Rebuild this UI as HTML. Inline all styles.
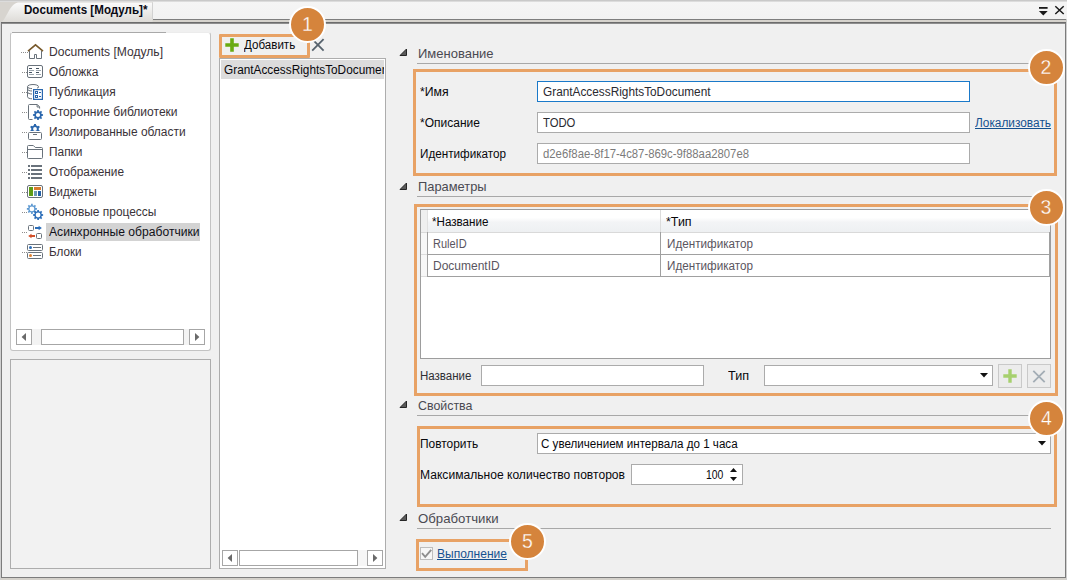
<!DOCTYPE html>
<html lang="ru"><head><meta charset="utf-8"><title>Documents [Модуль]</title>
<style>
html,body{margin:0;padding:0}
body{width:1067px;height:580px;overflow:hidden;background:#f0f0f0;position:relative;font-family:"Liberation Sans",sans-serif;font-size:12px;color:#1e1e1e}
.a{position:absolute;box-sizing:border-box}
.t{position:absolute;white-space:nowrap;line-height:16px;height:16px;transform-origin:0 50%}
.ic{position:absolute;overflow:visible}
.inp{position:absolute;box-sizing:border-box;background:#fff;border:1px solid #ababab}
.ob{position:absolute;box-sizing:border-box;border:3px solid #e8a265}
.num{position:absolute;box-sizing:border-box;width:37px;height:37px;border-radius:50%;background:#d5843c;border:2px solid #fff;color:#fff;font-size:19.5px;line-height:32px;text-align:center;-webkit-text-stroke:0.3px #d5843c}
.hl{position:absolute;height:1px;background:#a8a8a8}
.tri{position:absolute;width:0;height:0;border-left:8px solid transparent;border-bottom:8px solid #3c3c3c}
.sb{position:absolute;box-sizing:border-box;background:#fff;border:1px solid #a6a6a6}
.lnk{color:#15518f;text-decoration:underline}
</style></head><body>

<div class="a" style="left:0;top:0;width:1067px;height:19px;background:linear-gradient(#f5f5f5,#f2f2f2)"></div>
<div class="a" style="left:0;top:0;width:1067px;height:1px;background:#c9c9c9"></div>
<div class="a" style="left:0;top:1px;width:1067px;height:1px;background:#dcdcdc"></div>
<div class="a" style="left:0;top:19px;width:1067px;height:1px;background:#7e7e7e"></div>
<div class="a" style="left:0;top:20px;width:1067px;height:2px;background:#d6d3cd"></div>
<div class="a" style="left:1px;top:22px;width:1065px;height:556px;border:1px solid #7c7c7c"></div>
<div class="a" style="left:1px;top:22px;width:1065px;height:1px;background:#6c6c6c"></div>
<div class="a" style="left:2px;top:23px;width:1063px;height:1px;background:#8e8e8e"></div>
<div class="a" style="left:0;top:578px;width:1067px;height:2px;background:#d4d1cb"></div>
<div class="a" style="left:0;top:22px;width:1px;height:558px;background:#d0d0d0"></div>
<div class="a" style="left:1066px;top:19px;width:1px;height:561px;background:#d0d0d0"></div>
<svg class="ic" style="left:0;top:0" width="160" height="22" viewBox="0 0 160 22"><defs><linearGradient id="tg" x1="0" y1="0" x2="0" y2="1"><stop offset="0" stop-color="#fbfbfb"/><stop offset="1" stop-color="#dddbd7"/></linearGradient></defs><rect x="0" y="2" width="153" height="20" fill="#d7d4cf"/><path d="M1 22C6 21 9 4 18 2.5H152.5V22Z" fill="url(#tg)"/><path d="M152.5 2.5V19" stroke="#d2d2d2" stroke-width="1"/></svg>
<span class="t" style="left:24px;top:1.5999999999999996px;font-size:12px;color:#0a0a14;font-weight:bold;transform:scaleX(0.9664);">Documents [Модуль]*</span>
<svg class="ic" style="left:1036px;top:3px" width="30" height="14" viewBox="0 0 30 14"><path d="M3 4.9H11.6" stroke="#1a1a1a" stroke-width="1.8"/><path d="M2.9 8H11.7L7.3 12.5Z" fill="#1a1a1a"/><path d="M19.3 3.3L27.7 11M27.7 3.3L19.3 11" stroke="#1a1a1a" stroke-width="1.5"/></svg>
<div class="a" style="left:10px;top:32px;width:201px;height:319px;background:#fff;border:1px solid #c3c3c3;border-top-color:#ececec;border-radius:3px"></div>
<div class="a" style="left:12px;top:32px;width:154px;height:1px;background:#a9a9a9"></div>
<div class="a" style="left:46px;top:223px;width:154px;height:18px;background:#d3d3d3"></div>
<div class="a" style="left:21px;top:52px;width:7px;height:1px;background:repeating-linear-gradient(90deg,#8c8c8c 0 1px,transparent 1px 2px)"></div>
<svg class="ic" style="left:27px;top:44px" width="16" height="16" viewBox="0 0 16 16"><path d="M2.5 7V14.5H7.5V10.5H9.5V14.5H14.5V7" fill="#fff" stroke="#69727b" stroke-width="1"/><path d="M1 7.1L8.5 0.8L16 7.1" fill="none" stroke="#77582a" stroke-width="1.6"/></svg>
<span class="t" style="left:49px;top:43.7px;font-size:12px;color:#3a3238;transform:scaleX(1.0068);">Documents [Модуль]</span>
<div class="a" style="left:22px;top:72px;width:6px;height:1px;background:repeating-linear-gradient(90deg,#8c8c8c 0 1px,transparent 1px 2px)"></div>
<svg class="ic" style="left:27px;top:64px" width="16" height="16" viewBox="0 0 16 16"><rect x="0.5" y="1.5" width="15" height="12" rx="1.5" fill="#fff" stroke="#69727b"/><path d="M2 4.5H5M9 4.5H12M2 8.5H5M9 8.5H12" stroke="#44525f" stroke-width="1"/><path d="M2 6.5H7M9 6.5H14M2 10.5H7M9 10.5H14" stroke="#9ca6ae" stroke-width="1"/></svg>
<span class="t" style="left:49px;top:63.7px;font-size:12px;color:#3a3238;transform:scaleX(0.9967);">Обложка</span>
<div class="a" style="left:22px;top:92px;width:6px;height:1px;background:repeating-linear-gradient(90deg,#8c8c8c 0 1px,transparent 1px 2px)"></div>
<svg class="ic" style="left:27px;top:84px" width="16" height="16" viewBox="0 0 16 16"><path d="M0.5 2.7C0.5 -0.2 11.5 -0.2 11.5 2.7V3.4C11.3 3.9 10.6 4 10 3.8M0.5 2.7V12.8C0.5 14 2.6 14.7 5 14.8M0.5 5.2C0.8 6.3 2.6 6.9 5 7M0.5 8.2C0.8 9.3 2.6 9.9 5 10M0.5 2.9C0.8 4 2.6 4.5 5 4.6" fill="none" stroke="#69727b" stroke-width="1"/><rect x="6.6" y="5.6" width="8.8" height="9.8" fill="#fff" stroke="#2b67ad" stroke-width="1.2"/><path d="M8 7H11V10H8ZM9 8V9H10V8ZM8 11H11V14H8ZM9 12V13H10V12Z" fill="#2b67ad" fill-rule="evenodd"/><path d="M12 8.5H14M12 12.5H14" stroke="#2b67ad" stroke-width="1"/></svg>
<span class="t" style="left:49px;top:83.7px;font-size:12px;color:#3a3238;transform:scaleX(0.9931);">Публикация</span>
<div class="a" style="left:22px;top:112px;width:6px;height:1px;background:repeating-linear-gradient(90deg,#8c8c8c 0 1px,transparent 1px 2px)"></div>
<svg class="ic" style="left:27px;top:104px" width="16" height="16" viewBox="0 0 16 16"><path d="M5.5 15.5H2.5Q1.5 15.5 1.5 14.5V1.5Q1.5 0.5 2.5 0.5H10.3L12.6 2.8V4.6" fill="none" stroke="#69727b" stroke-width="1"/><path d="M10.1 0.7V3H12.4" fill="none" stroke="#69727b" stroke-width="1"/><path d="M16.04 10.20 L16.04 11.80 L14.67 11.88 L14.22 12.97 L15.13 14.00 L14.00 15.13 L12.97 14.22 L11.88 14.67 L11.80 16.04 L10.20 16.04 L10.12 14.67 L9.03 14.22 L8.00 15.13 L6.87 14.00 L7.78 12.97 L7.33 11.88 L5.96 11.80 L5.96 10.20 L7.33 10.12 L7.78 9.03 L6.87 8.00 L8.00 6.87 L9.03 7.78 L10.12 7.33 L10.20 5.96 L11.80 5.96 L11.88 7.33 L12.97 7.78 L14.00 6.87 L15.13 8.00 L14.22 9.03 L14.67 10.12Z M13.10 11.00 A2.10 2.10 0 1 0 8.90 11.00 A2.10 2.10 0 1 0 13.10 11.00Z" fill="#2b67ad" fill-rule="evenodd"/></svg>
<span class="t" style="left:49px;top:103.7px;font-size:12px;color:#3a3238;transform:scaleX(1.0044);">Сторонние библиотеки</span>
<div class="a" style="left:22px;top:132px;width:6px;height:1px;background:repeating-linear-gradient(90deg,#8c8c8c 0 1px,transparent 1px 2px)"></div>
<svg class="ic" style="left:27px;top:124px" width="16" height="16" viewBox="0 0 16 16"><clipPath id="c5"><rect x="0" y="-1" width="16" height="8"/></clipPath><g clip-path="url(#c5)"><path d="M7.08 -0.12 L8.92 -0.12 L9.09 1.25 L10.70 2.19 L11.97 1.64 L12.89 3.24 L11.79 4.07 L11.79 5.93 L12.89 6.76 L11.97 8.36 L10.70 7.81 L9.09 8.75 L8.92 10.12 L7.08 10.12 L6.91 8.75 L5.30 7.81 L4.03 8.36 L3.11 6.76 L4.21 5.93 L4.21 4.07 L3.11 3.24 L4.03 1.64 L5.30 2.19 L6.91 1.25Z M9.90 5.00 A1.90 1.90 0 1 0 6.10 5.00 A1.90 1.90 0 1 0 9.90 5.00Z" fill="#2b67ad" fill-rule="evenodd"/></g><rect x="1.5" y="8.5" width="13" height="7" rx="1" fill="#fff" stroke="#69727b"/><path d="M6 10.5H10" stroke="#69727b" stroke-width="1"/></svg>
<span class="t" style="left:49px;top:123.69999999999999px;font-size:12px;color:#3a3238;transform:scaleX(0.9961);">Изолированные области</span>
<div class="a" style="left:22px;top:152px;width:6px;height:1px;background:repeating-linear-gradient(90deg,#8c8c8c 0 1px,transparent 1px 2px)"></div>
<svg class="ic" style="left:27px;top:144px" width="16" height="16" viewBox="0 0 16 16"><path d="M0.5 13.5V2.5Q0.5 1.5 1.5 1.5H6.3L8.3 3.5H14.5Q15.5 3.5 15.5 4.5V13.5Q15.5 14.5 14.5 14.5H1.5Q0.5 14.5 0.5 13.5Z" fill="#fff" stroke="#69727b"/><path d="M0.5 5.5H15.5" stroke="#69727b" stroke-width="1"/></svg>
<span class="t" style="left:49px;top:143.7px;font-size:12px;color:#3a3238;transform:scaleX(0.9896);">Папки</span>
<div class="a" style="left:22px;top:172px;width:6px;height:1px;background:repeating-linear-gradient(90deg,#8c8c8c 0 1px,transparent 1px 2px)"></div>
<svg class="ic" style="left:27px;top:164px" width="16" height="16" viewBox="0 0 16 16"><path d="M1 2H3M1 6H3M1 10H3M1 14H3M4 2H15M4 6H15M4 10H15M4 14H15" stroke="#69727b" stroke-width="2"/></svg>
<span class="t" style="left:49px;top:163.7px;font-size:12px;color:#3a3238;transform:scaleX(0.9830);">Отображение</span>
<div class="a" style="left:22px;top:192px;width:6px;height:1px;background:repeating-linear-gradient(90deg,#8c8c8c 0 1px,transparent 1px 2px)"></div>
<svg class="ic" style="left:27px;top:184px" width="16" height="16" viewBox="0 0 16 16"><rect x="0.5" y="1.5" width="15" height="12" rx="1.5" fill="#fff" stroke="#69727b"/><rect x="2" y="3" width="4" height="9" fill="#5e9c16"/><rect x="7" y="3" width="7" height="3" fill="#d87a2e"/><rect x="7" y="7" width="3" height="5" fill="#6c9ab4"/><rect x="11" y="7" width="3" height="5" fill="#2461a8"/></svg>
<span class="t" style="left:49px;top:183.7px;font-size:12px;color:#3a3238;transform:scaleX(0.9493);">Виджеты</span>
<div class="a" style="left:22px;top:212px;width:6px;height:1px;background:repeating-linear-gradient(90deg,#8c8c8c 0 1px,transparent 1px 2px)"></div>
<svg class="ic" style="left:27px;top:204px" width="16" height="16" viewBox="0 0 16 16"><path d="M9.94 4.10 L9.94 5.70 L8.57 5.78 L8.12 6.87 L9.03 7.90 L7.90 9.03 L6.87 8.12 L5.78 8.57 L5.70 9.94 L4.10 9.94 L4.02 8.57 L2.93 8.12 L1.90 9.03 L0.77 7.90 L1.68 6.87 L1.23 5.78 L-0.14 5.70 L-0.14 4.10 L1.23 4.02 L1.68 2.93 L0.77 1.90 L1.90 0.77 L2.93 1.68 L4.02 1.23 L4.10 -0.14 L5.70 -0.14 L5.78 1.23 L6.87 1.68 L7.90 0.77 L9.03 1.90 L8.12 2.93 L8.57 4.02Z M7.30 4.90 A2.40 2.40 0 1 0 2.50 4.90 A2.40 2.40 0 1 0 7.30 4.90Z" fill="#5f9ad2" fill-rule="evenodd"/><path d="M16.14 10.20 L16.14 11.80 L14.77 11.88 L14.32 12.97 L15.23 14.00 L14.10 15.13 L13.07 14.22 L11.98 14.67 L11.90 16.04 L10.30 16.04 L10.22 14.67 L9.13 14.22 L8.10 15.13 L6.97 14.00 L7.88 12.97 L7.43 11.88 L6.06 11.80 L6.06 10.20 L7.43 10.12 L7.88 9.03 L6.97 8.00 L8.10 6.87 L9.13 7.78 L10.22 7.33 L10.30 5.96 L11.90 5.96 L11.98 7.33 L13.07 7.78 L14.10 6.87 L15.23 8.00 L14.32 9.03 L14.77 10.12Z M13.50 11.00 A2.40 2.40 0 1 0 8.70 11.00 A2.40 2.40 0 1 0 13.50 11.00Z" fill="#2b6db8" fill-rule="evenodd"/></svg>
<span class="t" style="left:49px;top:203.7px;font-size:12px;color:#3a3238;transform:scaleX(0.9944);">Фоновые процессы</span>
<div class="a" style="left:22px;top:232px;width:6px;height:1px;background:repeating-linear-gradient(90deg,#8c8c8c 0 1px,transparent 1px 2px)"></div>
<svg class="ic" style="left:27px;top:224px" width="16" height="16" viewBox="0 0 16 16"><rect x="1.5" y="1.5" width="5" height="5" rx="1" fill="#fff" stroke="#69727b"/><path d="M8 4H12.5" stroke="#2b6db8" stroke-width="2"/><path d="M11.6 1.7L14.9 4L11.6 6.3Z" fill="#2b6db8"/><rect x="9.5" y="9.5" width="5" height="5" rx="1" fill="#fff" stroke="#69727b"/><path d="M4 12H8" stroke="#d2502a" stroke-width="2"/><path d="M4.5 9.7L1.2 12L4.5 14.3Z" fill="#d2502a"/></svg>
<span class="t" style="left:49px;top:223.7px;font-size:12px;color:#101018;transform:scaleX(1.0097);">Асинхронные обработчики</span>
<div class="a" style="left:22px;top:252px;width:6px;height:1px;background:repeating-linear-gradient(90deg,#8c8c8c 0 1px,transparent 1px 2px)"></div>
<svg class="ic" style="left:27px;top:244px" width="16" height="16" viewBox="0 0 16 16"><rect x="0.5" y="0.5" width="15" height="6" rx="1" fill="#fff" stroke="#69727b"/><rect x="0.5" y="8.5" width="15" height="6" rx="1" fill="#fff" stroke="#69727b"/><circle cx="3.5" cy="3.5" r="1.5" fill="#2b6db8"/><circle cx="3.5" cy="11.5" r="1.5" fill="#e0812f"/><path d="M6 3.5H14M6 11.5H14" stroke="#69727b" stroke-width="1"/></svg>
<span class="t" style="left:49px;top:243.7px;font-size:12px;color:#3a3238;transform:scaleX(0.9727);">Блоки</span>
<div class="a" style="left:32px;top:329px;width:157px;height:16px;background:#f3f3f3"></div>
<div class="sb" style="left:16px;top:329px;width:16px;height:16px"></div><svg class="ic" style="left:16px;top:329px" width="16" height="16"><path d="M10 4V12L5.6 8Z" fill="#6a6a6a"/></svg><div class="sb" style="left:41px;top:329px;width:143px;height:16px"></div><div class="sb" style="left:189px;top:329px;width:16px;height:16px"></div><svg class="ic" style="left:189px;top:329px" width="16" height="16"><path d="M6 4V12L10.4 8Z" fill="#6a6a6a"/></svg>
<div class="a" style="left:10px;top:359px;width:201px;height:210px;background:#f2f2f2;border:1px solid #adadad"></div>
<div class="a" style="left:219px;top:34px;width:91px;height:24px;border:3px solid #e8a265;border-radius:1px"></div>
<svg class="ic" style="left:225px;top:38px" width="14" height="14"><path d="M5.2 0.3H8.8V5.2H13.7V8.8H8.8V13.7H5.2V8.8H0.3V5.2H5.2Z" fill="#69ab12"/></svg>
<span class="t" style="left:244px;top:37.3px;font-size:12px;color:#08080c;transform:scaleX(0.9652);">Добавить</span>
<svg class="ic" style="left:311px;top:38px" width="14" height="14"><path d="M1.2 1.2L12.6 12.6M12.6 1.2L1.2 12.6" stroke="#56626d" stroke-width="1.8"/></svg>
<div class="num" style="left:289.0px;top:6.0px">1</div>
<div class="a" style="left:219px;top:58px;width:167px;height:511px;background:#fff;border:1px solid #adadad"></div>
<div class="a" style="left:221px;top:60px;width:163px;height:19px;background:#dcdcdc;overflow:hidden"><span class="t" style="left:3px;top:1.5999999999999996px;font-size:12px;color:#08080c;transform:scaleX(0.9848);">GrantAccessRightsToDocument</span></div>
<div class="a" style="left:358px;top:550px;width:9px;height:16px;background:#f6f6f6"></div>
<div class="sb" style="left:222px;top:550px;width:16px;height:16px"></div><svg class="ic" style="left:222px;top:550px" width="16" height="16"><path d="M10 4V12L5.6 8Z" fill="#6a6a6a"/></svg><div class="sb" style="left:239px;top:550px;width:119px;height:16px"></div><div class="sb" style="left:367px;top:550px;width:16px;height:16px"></div><svg class="ic" style="left:367px;top:550px" width="16" height="16"><path d="M6 4V12L10.4 8Z" fill="#6a6a6a"/></svg>
<svg class="ic" style="left:399px;top:48px" width="8" height="8"><path d="M1 7.5H7.5V1Z" fill="#5a5a5a" stroke="#262626" stroke-width="1" stroke-linejoin="miter"/></svg><span class="t" style="left:418px;top:45.6px;font-size:13px;color:#4a4a52;">Именование</span><div class="hl" style="left:417px;top:63px;width:634px"></div>
<div class="ob" style="left:413px;top:69px;width:644px;height:107px"></div>
<span class="t" style="left:420px;top:84px;font-size:12px;color:#08080c;transform:scaleX(1.0197);">*Имя</span>
<div class="inp" style="left:537px;top:81px;width:433px;height:21px;border-color:#1a79c9"></div>
<span class="t" style="left:543px;top:84px;font-size:12px;color:#2a2a30;transform:scaleX(0.9848);">GrantAccessRightsToDocument</span>
<span class="t" style="left:420px;top:115px;font-size:12px;color:#08080c;">*Описание</span>
<div class="inp" style="left:537px;top:112px;width:433px;height:21px"></div>
<span class="t" style="left:543px;top:115px;font-size:12px;color:#2a2a30;transform:scaleX(0.9404);">TODO</span>
<span class="t lnk" style="left:975px;top:115px;font-size:12px;color:#15518f;transform:scaleX(0.9884);">Локализовать</span>
<span class="t" style="left:420px;top:146px;font-size:12px;color:#08080c;transform:scaleX(0.9735);">Идентификатор</span>
<div class="inp" style="left:537px;top:143px;width:433px;height:21px"></div>
<span class="t" style="left:543px;top:146px;font-size:12px;color:#7b7b7b;transform:scaleX(0.9441);">d2e6f8ae-8f17-4c87-869c-9f88aa2807e8</span>
<div class="num" style="left:1027.5px;top:49.0px">2</div>
<svg class="ic" style="left:399px;top:182px" width="8" height="8"><path d="M1 7.5H7.5V1Z" fill="#5a5a5a" stroke="#262626" stroke-width="1" stroke-linejoin="miter"/></svg><span class="t" style="left:418px;top:179px;font-size:13px;color:#4a4a52;transform:scaleX(0.9897);">Параметры</span><div class="hl" style="left:417px;top:196px;width:634px"></div>
<div class="ob" style="left:414px;top:204px;width:644px;height:192px"></div>
<div class="a" style="left:420px;top:209px;width:631px;height:150px;background:#fff;border:1px solid #9d9d9d"></div>
<div class="a" style="left:421px;top:210px;width:629px;height:23px;background:linear-gradient(#fff 0,#fff 35%,#f3f4f6 55%,#eef0f2 100%);border-bottom:1px solid #d9d9d9"></div>
<div class="a" style="left:421px;top:210px;width:6px;height:22px;background:#efefef"></div>
<div class="a" style="left:421px;top:233px;width:6px;height:44px;background:#f7f7f7"></div>
<div class="a" style="left:427px;top:210px;width:1px;height:22px;background:#e0e0e0"></div>
<div class="a" style="left:660px;top:210px;width:1px;height:22px;background:#dcdcdc"></div>
<div class="a" style="left:427px;top:232px;width:1px;height:45px;background:#a0a0a0"></div>
<div class="a" style="left:660px;top:232px;width:1px;height:45px;background:#a0a0a0"></div>
<div class="a" style="left:1049px;top:232px;width:1px;height:45px;background:#a0a0a0"></div>
<div class="a" style="left:421px;top:254px;width:6px;height:1px;background:#dcdcdc"></div>
<div class="a" style="left:421px;top:276px;width:6px;height:1px;background:#dcdcdc"></div>
<div class="a" style="left:427px;top:254px;width:623px;height:1px;background:#a0a0a0"></div>
<div class="a" style="left:427px;top:276px;width:623px;height:1px;background:#a0a0a0"></div>
<span class="t" style="left:432px;top:214px;font-size:12px;color:#08080c;transform:scaleX(0.9675);">*Название</span>
<span class="t" style="left:666px;top:214px;font-size:12px;color:#08080c;transform:scaleX(1.0370);">*Тип</span>
<span class="t" style="left:433px;top:236px;font-size:12px;color:#5a5560;transform:scaleX(0.9158);">RuleID</span>
<span class="t" style="left:667px;top:236px;font-size:12px;color:#5a5560;transform:scaleX(0.9735);">Идентификатор</span>
<span class="t" style="left:433px;top:258px;font-size:12px;color:#5a5560;">DocumentID</span>
<span class="t" style="left:667px;top:258px;font-size:12px;color:#5a5560;transform:scaleX(0.9735);">Идентификатор</span>
<span class="t" style="left:419.5px;top:368px;font-size:12px;color:#2e2e34;transform:scaleX(0.9585);">Название</span>
<div class="inp" style="left:481px;top:365px;width:223px;height:21px"></div>
<span class="t" style="left:728px;top:368px;font-size:12px;color:#08080c;transform:scaleX(1.0492);">Тип</span>
<div class="inp" style="left:764px;top:365px;width:229px;height:21px"></div>
<svg class="ic" style="left:979px;top:372px" width="10" height="6"><path d="M1 1H9L5 5.4Z" fill="#111"/></svg>
<div class="a" style="left:998px;top:364px;width:24px;height:24px;background:#ececec;border:1px solid #c9c9c9"></div>
<svg class="ic" style="left:1003px;top:369px" width="14" height="14"><path d="M5.3 0.3H8.7V5.3H13.7V8.7H8.7V13.7H5.3V8.7H0.3V5.3H5.3Z" fill="#a6d06e"/></svg>
<div class="a" style="left:1027px;top:364px;width:24px;height:24px;background:#ececec;border:1px solid #c9c9c9"></div>
<svg class="ic" style="left:1032px;top:370px" width="13" height="13"><path d="M1.3 0.8L12.7 12.2M12.7 0.8L1.3 12.2" stroke="#a3adb5" stroke-width="1.8"/></svg>
<div class="num" style="left:1027.5px;top:189.0px">3</div>
<svg class="ic" style="left:399px;top:400px" width="8" height="8"><path d="M1 7.5H7.5V1Z" fill="#5a5a5a" stroke="#262626" stroke-width="1" stroke-linejoin="miter"/></svg><span class="t" style="left:418px;top:397.6px;font-size:13px;color:#4a4a52;transform:scaleX(0.9528);">Свойства</span><div class="hl" style="left:417px;top:415px;width:634px"></div>
<div class="ob" style="left:417px;top:426px;width:640px;height:81px"></div>
<span class="t" style="left:420.4px;top:436px;font-size:12px;color:#08080c;transform:scaleX(0.9935);">Повторить</span>
<div class="inp" style="left:537px;top:433px;width:514px;height:21px"></div>
<span class="t" style="left:541px;top:436px;font-size:12px;color:#08080c;transform:scaleX(0.9669);">С увеличением интервала до 1 часа</span>
<svg class="ic" style="left:1037px;top:440px" width="10" height="6"><path d="M1 1H9L5 5.4Z" fill="#111"/></svg>
<span class="t" style="left:420.4px;top:467px;font-size:12px;color:#08080c;transform:scaleX(1.0069);">Максимальное количество повторов</span>
<div class="inp" style="left:631px;top:464px;width:112px;height:21px"></div>
<span class="t" style="left:705.5px;top:467px;font-size:12px;color:#08080c;transform:scaleX(0.8686);">100</span>
<svg class="ic" style="left:729px;top:467px" width="10" height="16"><path d="M1 5L4.5 0.9L8 5Z" fill="#111"/><path d="M1 10H8L4.5 14.1Z" fill="#111"/></svg>
<div class="num" style="left:1028.0px;top:399.5px">4</div>
<svg class="ic" style="left:399px;top:513px" width="8" height="8"><path d="M1 7.5H7.5V1Z" fill="#5a5a5a" stroke="#262626" stroke-width="1" stroke-linejoin="miter"/></svg><span class="t" style="left:418px;top:510.6px;font-size:13px;color:#4a4a52;transform:scaleX(1.0156);">Обработчики</span><div class="hl" style="left:417px;top:528px;width:634px"></div>
<div class="ob" style="left:416px;top:539px;width:112px;height:32px"></div>
<div class="a" style="left:420px;top:547px;width:13px;height:13px;background:#f6f6f6;border:1px solid #bdbdbd"></div>
<svg class="ic" style="left:420px;top:547px" width="13" height="13"><path d="M2 6.2L5.2 9.8L11.2 2.8" fill="none" stroke="#8e8e8e" stroke-width="1.9"/></svg>
<span class="t lnk" style="left:437px;top:546px;font-size:12px;color:#15518f;transform:scaleX(1.0022);">Выполнение</span>
<div class="num" style="left:509.0px;top:522.5px">5</div>
</body></html>
